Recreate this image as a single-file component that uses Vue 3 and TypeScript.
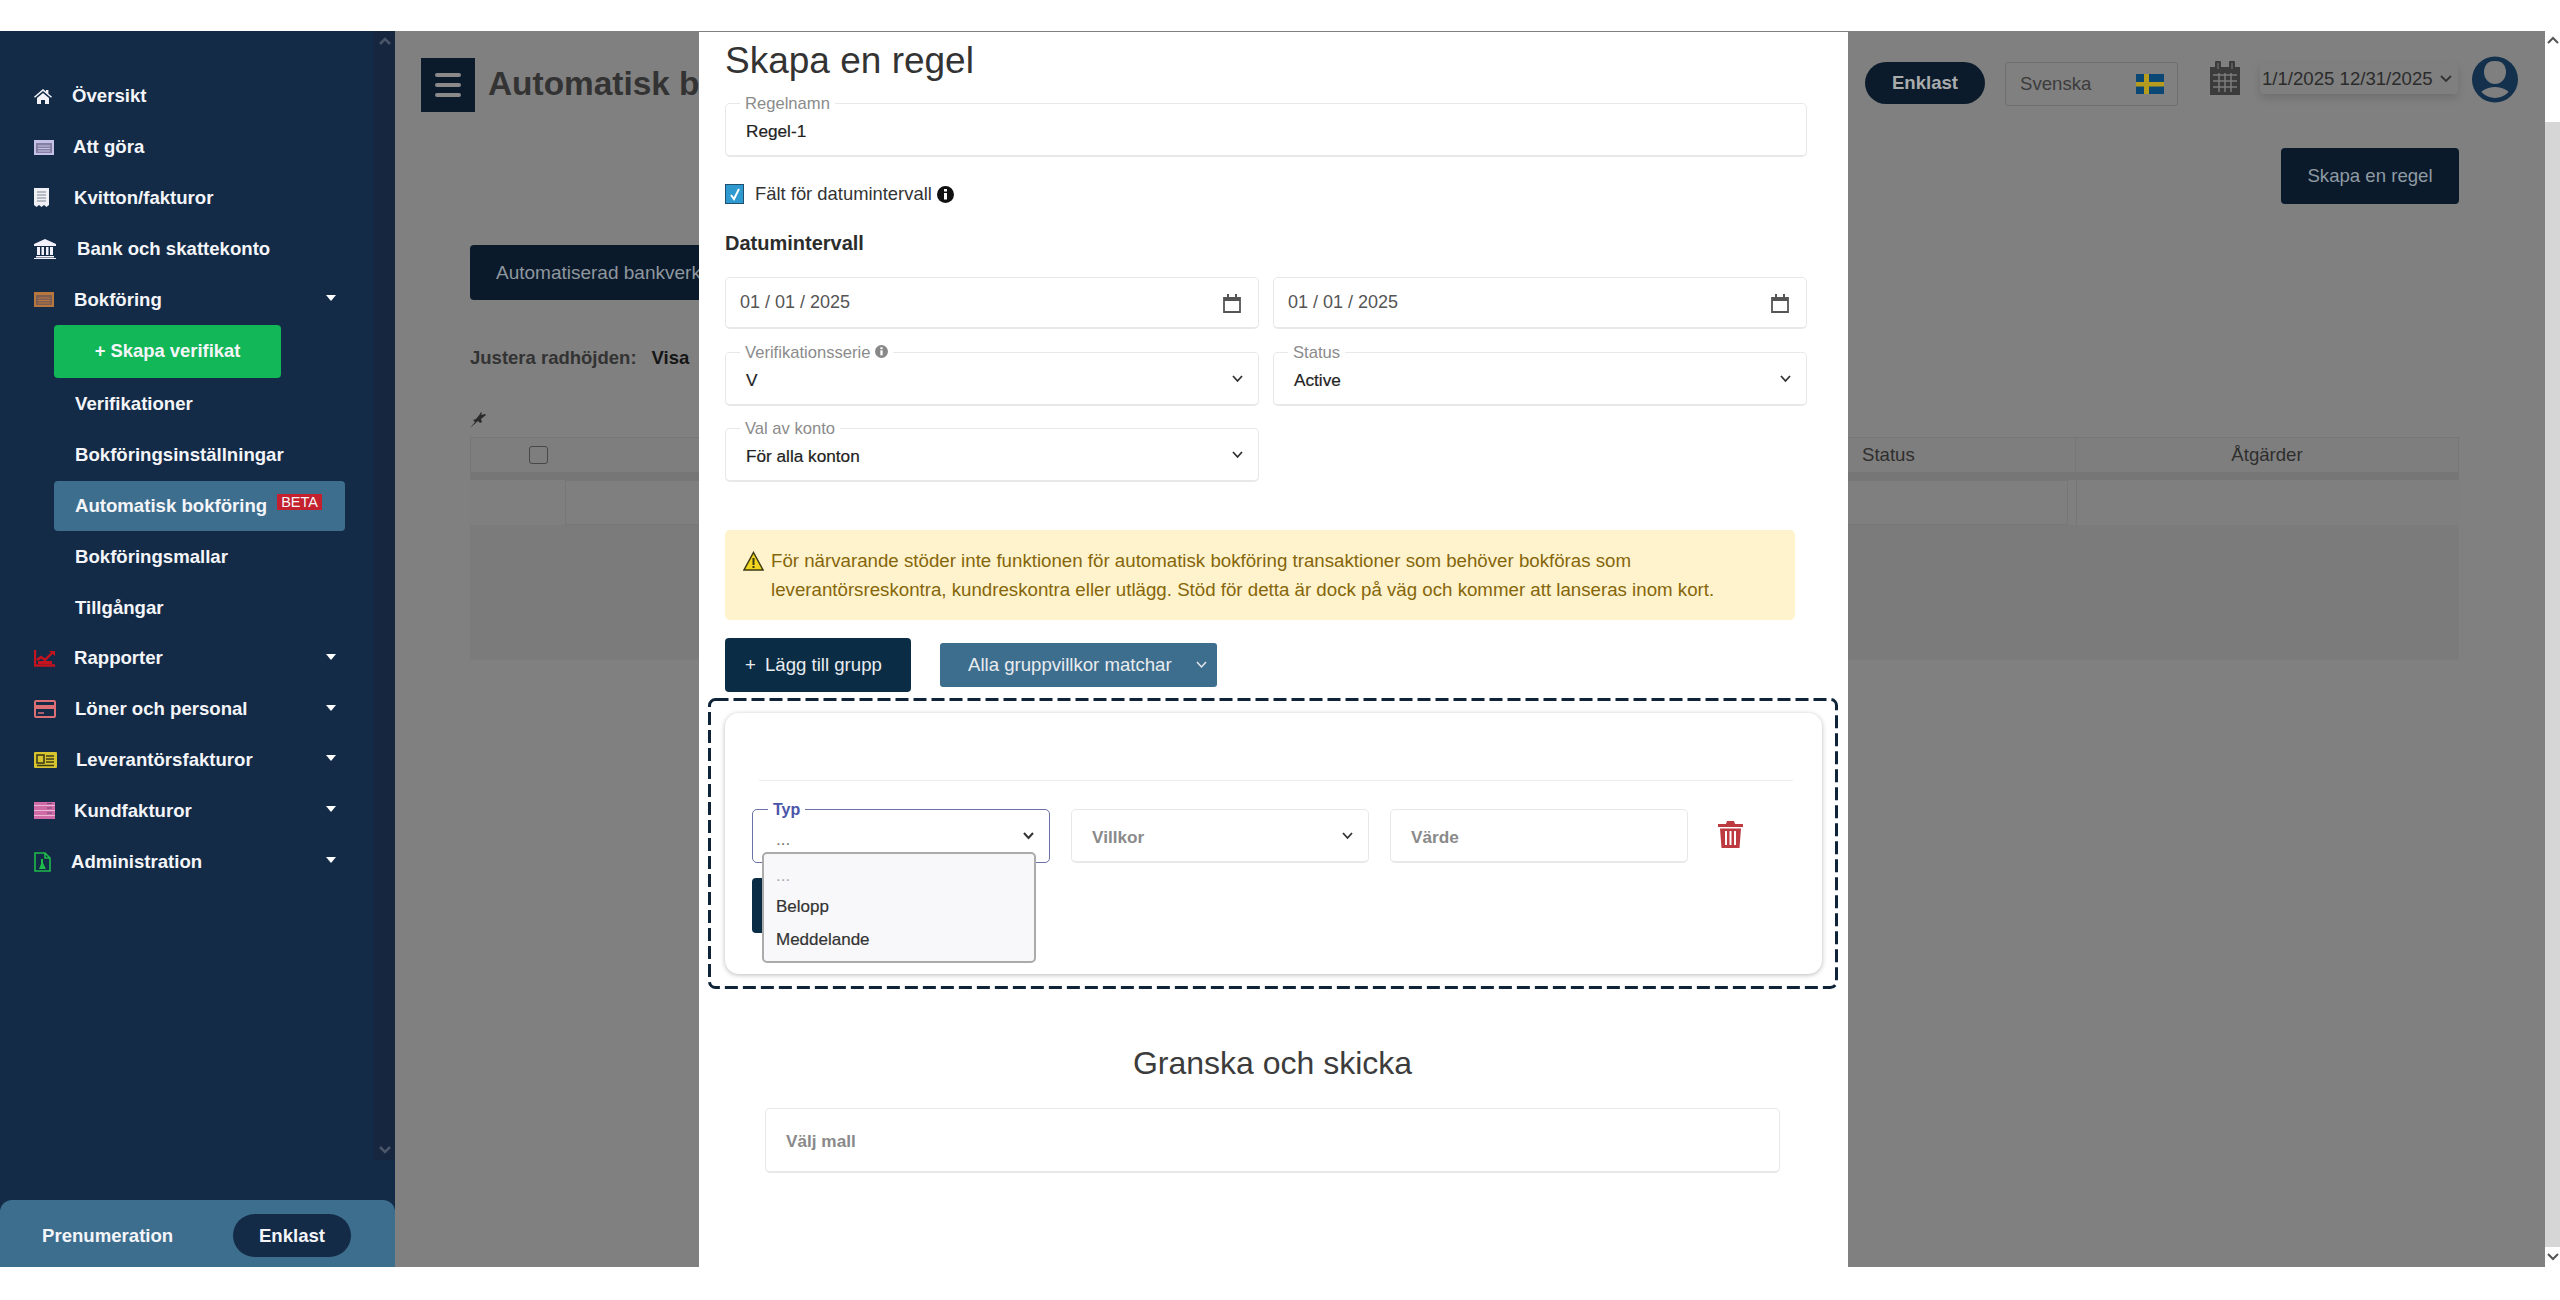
<script setup lang="ts">
type NavIcon = 'home' | 'list' | 'receipt' | 'bank' | 'chart' | 'card' | 'id' | 'rows' | 'file'
interface NavItem { label: string; icon: NavIcon; start: number; color: string; caret?: boolean }

const topItems: NavItem[] = [
  { label: 'Översikt', icon: 'home', start: 38, color: '#f2f2f8' },
  { label: 'Att göra', icon: 'list', start: 39, color: '#c7c0e6' },
  { label: 'Kvitton/fakturor', icon: 'receipt', start: 40, color: '#f0f0f4' },
  { label: 'Bank och skattekonto', icon: 'bank', start: 43, color: '#f2f0fa' },
  { label: 'Bokföring', icon: 'list', start: 40, color: '#b8773c', caret: true },
]
const subItems = ['Verifikationer', 'Bokföringsinställningar', 'Automatisk bokföring', 'Bokföringsmallar', 'Tillgångar']
const lowerItems: NavItem[] = [
  { label: 'Rapporter', icon: 'chart', start: 40, color: '#c5131f', caret: true },
  { label: 'Löner och personal', icon: 'card', start: 41, color: '#dc6e74', caret: true },
  { label: 'Leverantörsfakturor', icon: 'id', start: 42, color: '#d8c42f', caret: true },
  { label: 'Kundfakturor', icon: 'rows', start: 40, color: '#d06aa6', caret: true },
  { label: 'Administration', icon: 'file', start: 37, color: '#1fbb4b', caret: true },
]
</script>

<template>
  <div class="page">
    <div class="frame">
      <aside class="sidebar">
        <div class="side-body">
          <nav class="nav">
            <div v-for="item in topItems" :key="item.label" class="nav-row">
              <span class="nav-icon" :style="{ width: item.start + 'px', color: item.color }">
                <svg v-if="item.icon === 'home'" width="18" height="15" viewBox="0 0 18 15"><path fill="currentColor" d="M9 0l3 2.600V1h2.400v3.700L18 7.800l-1 1-8-6.800-8 6.800-1-1zM3 9l6-5 6 5v6h-4v-4H7v4H3z" /></svg>
                <svg v-else-if="item.icon === 'list'" width="20" height="15" viewBox="0 0 20 15"><rect width="20" height="15" fill="currentColor" /><rect x="2" y="3" width="16" height="10" fill="#4d4a6a" opacity=".55" /><path stroke="currentColor" stroke-width="1" d="M4 6h12M4 8.500h12M4 11h12" /></svg>
                <svg v-else-if="item.icon === 'receipt'" width="15" height="19" viewBox="0 0 15 19"><path fill="currentColor" d="M0 0h15v17l-2.500 2-2.500-2-2.500 2-2.500-2-2.500 2L0 17z" /><path stroke="#7b8496" stroke-width="1.200" d="M3 4h9M3 7h9M3 10h9M3 13h9" /></svg>
                <svg v-else width="22" height="20" viewBox="0 0 22 20"><path fill="currentColor" d="M11 0l11 5v2H0V5zM2 17h18v1.500H2zM0 19h22v1H0zM3 8h3v8H3zM7.500 8h2.500v8H7.500zM12 8h2.500v8H12zM16 8h3v8h-3z" /></svg>
              </span>
              <span>{{ item.label }}</span>
              <span v-if="item.caret" class="caret"></span>
            </div>

            <div class="green-btn">+ Skapa verifikat</div>

            <div
              v-for="sub in subItems"
              :key="sub"
              class="sub-row"
              :class="{ active: sub === 'Automatisk bokföring' }"
            >
              <span>{{ sub }}</span>
              <span v-if="sub === 'Automatisk bokföring'" class="beta">BETA</span>
            </div>

            <div v-for="item in lowerItems" :key="item.label" class="nav-row">
              <span class="nav-icon" :style="{ width: item.start + 'px', color: item.color }">
                <svg v-if="item.icon === 'chart'" width="21" height="17" viewBox="0 0 21 17"><path fill="none" stroke="currentColor" stroke-width="2.400" d="M1 0v15.500h20M3 10l4-3 4 3 7-7" /><path fill="currentColor" d="M15 1h6v5zM4 11h14v3H4z" /></svg>
                <svg v-else-if="item.icon === 'card'" width="22" height="18" viewBox="0 0 22 18"><rect x="1" y="1" width="20" height="16" rx="1" fill="none" stroke="currentColor" stroke-width="2" /><rect x="1" y="5" width="20" height="4" fill="currentColor" /><path stroke="currentColor" stroke-width="1.500" d="M4 13h6" /></svg>
                <svg v-else-if="item.icon === 'id'" width="23" height="16" viewBox="0 0 23 16"><rect width="23" height="16" rx="1" fill="currentColor" /><rect x="3" y="3" width="7" height="8" fill="none" stroke="#3c3c18" stroke-width="1.600" /><path stroke="#3c3c18" stroke-width="1.500" d="M12 4h8M12 7h8M12 10h8M3 13.500h17" /></svg>
                <svg v-else-if="item.icon === 'rows'" width="21" height="17" viewBox="0 0 21 17"><rect width="21" height="17" fill="currentColor" /><path stroke="#e9b6d4" stroke-width="1.200" d="M0 3.500h21M0 8.500h21M0 13.500h21" /><path stroke="#13294a" stroke-width="1" d="M13 1.500h5M13 6h5M13 11h5" opacity=".5" /></svg>
                <svg v-else width="17" height="20" viewBox="0 0 17 20"><path fill="none" stroke="currentColor" stroke-width="1.600" d="M1 1h10l5 5v13H1zM11 1v5h5" /><path fill="currentColor" d="M7 7h2v4l3 6H5l2-5z" /></svg>
              </span>
              <span>{{ item.label }}</span>
              <span class="caret"></span>
            </div>
          </nav>
          <div class="side-scroll">
            <svg width="14" height="8" viewBox="0 0 14 8"><path fill="none" stroke="#4a5568" stroke-width="2.500" d="M2 7l5-5 5 5" /></svg>
            <svg width="14" height="8" viewBox="0 0 14 8"><path fill="none" stroke="#4a5568" stroke-width="2.500" d="M2 1l5 5 5-5" /></svg>
          </div>
        </div>
        <div class="side-foot">
          <span>Prenumeration</span>
          <span class="foot-pill">Enklast</span>
        </div>
      </aside>

      <main class="main">
        <header class="head">
          <button class="burger" type="button" aria-label="Meny">
            <span></span><span></span><span></span>
          </button>
          <h1 class="page-title">Automatisk bokföring</h1>
          <span class="head-pill">Enklast</span>
          <div class="lang">
            <span>Svenska</span>
            <svg width="28" height="20" viewBox="0 0 28 20"><rect width="28" height="20" fill="#0a4775" /><rect x="8" width="5" height="20" fill="#b59c1e" /><rect y="8" width="28" height="4.500" fill="#b59c1e" /></svg>
          </div>
          <svg class="cal" width="30" height="34" viewBox="0 0 30 34">
            <path fill="#3b3b3b" d="M0 6h5V2a3 3 0 0 1 6 0v4h8V2a3 3 0 0 1 6 0v4h5v28H0z" />
            <path stroke="#7c7c7c" stroke-width="1.500" d="M3 14h24M3 20h24M3 26h24M9 12v19M15 12v19M21 12v19" />
            <path stroke="#7c7c7c" stroke-width="1" d="M8 2v6M22 2v6" />
          </svg>
          <div class="range">
            <span>1/1/2025 12/31/2025</span>
            <svg width="12" height="8" viewBox="0 0 12 8"><path fill="none" stroke="#333" stroke-width="1.800" d="M1 1l5 5 5-5" /></svg>
          </div>
          <svg class="avatar" width="46" height="47" viewBox="0 0 46 47">
            <defs><clipPath id="avatar-clip"><circle cx="23" cy="23.500" r="18.500" /></clipPath></defs>
            <circle cx="23" cy="23.500" r="23" fill="#13304c" />
            <g clip-path="url(#avatar-clip)">
              <ellipse cx="23" cy="16" rx="11" ry="12" fill="#7f7f7f" />
              <ellipse cx="23" cy="43" rx="17" ry="12" fill="#7f7f7f" />
            </g>
          </svg>
        </header>

        <div class="content">
          <div class="new-row"><span class="new-btn">Skapa en regel</span></div>
          <div class="tab-row"><span class="tab">Automatiserad bankverksamhet</span></div>
          <p class="adjust">Justera radhöjden:<b>Visa</b></p>
          <svg class="pin" width="17" height="16" viewBox="0 0 17 16"><path fill="#2a2a2a" d="M0 16l5-6-2-2 3-1 4-5 1-2 1 1-1 2 4-1 1 1-5 4 1 3-2 1-2-2z" /></svg>
          <div class="table">
            <div class="thead">
              <div class="th-check"><span class="fake-check"></span></div>
              <div class="th-fill"></div>
              <div class="th-status">Status</div>
              <div class="th-actions">Åtgärder</div>
            </div>
            <div class="strip"></div>
            <div class="filters">
              <div class="f-a"></div>
              <div class="f-b"></div>
              <div class="f-c"></div>
            </div>
            <div class="tbody"></div>
          </div>
        </div>

        <section class="modal">
          <h2 class="modal-title">Skapa en regel</h2>

          <div class="field h54">
            <label class="legend">Regelnamn</label>
            <span class="value">Regel-1</span>
          </div>

          <div class="check-row">
            <span class="checkbox">
              <svg width="12" height="14" viewBox="0 0 12 14"><path fill="none" stroke="#fff" stroke-width="2" d="M2 8l3 4 5-10" /></svg>
            </span>
            <span>Fält för datumintervall</span>
            <svg class="info" width="17" height="17" viewBox="0 0 17 17"><circle cx="8.500" cy="8.500" r="8.500" fill="#111" /><rect x="7" y="7" width="3" height="6.500" fill="#fff" /><rect x="7" y="3" width="3" height="2.500" fill="#fff" /></svg>
          </div>

          <h3 class="section-label">Datumintervall</h3>

          <div class="grid-two date-row">
            <div v-for="n in 2" :key="n" class="field h52 date">
              <span>01 / 01 / 2025</span>
              <svg width="18" height="20" viewBox="0 0 18 20"><path fill="none" stroke="#555" stroke-width="1.800" d="M1 5h16v14H1z" /><path fill="#555" d="M1 5h16v3H1zM4 1h2v5H4zM12 1h2v5h-2z" /></svg>
            </div>
          </div>

          <div class="grid-two select-row">
            <div class="field h54">
              <label class="legend">Verifikationsserie
                <svg width="13" height="13" viewBox="0 0 17 17"><circle cx="8.500" cy="8.500" r="8.500" fill="#888" /><rect x="7" y="7" width="3" height="6.500" fill="#fff" /><rect x="7" y="3" width="3" height="2.500" fill="#fff" /></svg>
              </label>
              <span class="value">V</span>
              <svg class="chev" width="11" height="8" viewBox="0 0 11 8"><path fill="none" stroke="#333" stroke-width="1.800" d="M1 1l4.500 5L10 1" /></svg>
            </div>
            <div class="field h54">
              <label class="legend">Status</label>
              <span class="value">Active</span>
              <svg class="chev" width="11" height="8" viewBox="0 0 11 8"><path fill="none" stroke="#333" stroke-width="1.800" d="M1 1l4.500 5L10 1" /></svg>
            </div>
          </div>

          <div class="grid-two select-row2">
            <div class="field h54">
              <label class="legend">Val av konto</label>
              <span class="value">För alla konton</span>
              <svg class="chev" width="11" height="8" viewBox="0 0 11 8"><path fill="none" stroke="#333" stroke-width="1.800" d="M1 1l4.500 5L10 1" /></svg>
            </div>
          </div>

          <div class="alert">
            <svg class="warn" width="21" height="20" viewBox="0 0 21 20"><path fill="#f1d520" stroke="#3c3a10" stroke-width="1.500" d="M10.500 1.500L20 19H1z" /><path stroke="#3c3a10" stroke-width="2" d="M10.500 7v7M10.500 15v2" /></svg>
            <p>För närvarande stöder inte funktionen för automatisk bokföring transaktioner som behöver bokföras som leverantörsreskontra, kundreskontra eller utlägg. Stöd för detta är dock på väg och kommer att lanseras inom kort.</p>
          </div>

          <div class="actions">
            <span class="add-group"><i>+</i>Lägg till grupp</span>
            <span class="match">Alla gruppvillkor matchar
              <svg width="11" height="8" viewBox="0 0 11 8"><path fill="none" stroke="#e4e8ec" stroke-width="1.500" d="M1 1l4.500 5L10 1" /></svg>
            </span>
          </div>

          <div class="dashed">
            <svg class="dash-line" width="1130" height="291" viewBox="0 0 1130 291">
              <rect x="1.500" y="1.500" width="1127" height="288" rx="6" fill="none" stroke="#0f2438" stroke-width="3" stroke-dasharray="13 5" />
            </svg>
            <div class="card">
              <div class="card-rule"></div>
              <div class="cond-row">
                <div class="field h54 cond focused">
                  <label class="legend typ">Typ</label>
                  <span class="dots">...</span>
                  <svg class="chev" width="11" height="8" viewBox="0 0 11 8"><path fill="none" stroke="#333" stroke-width="2" d="M1 1l4.500 5L10 1" /></svg>
                  <div class="menu">
                    <div class="menu-dots">...</div>
                    <div class="menu-item">Belopp</div>
                    <div class="menu-item">Meddelande</div>
                  </div>
                </div>
                <div class="field h54 cond">
                  <span class="ph">Villkor</span>
                  <svg class="chev" width="11" height="8" viewBox="0 0 11 8"><path fill="none" stroke="#333" stroke-width="1.800" d="M1 1l4.500 5L10 1" /></svg>
                </div>
                <div class="field h54 cond"><span class="ph">Värde</span></div>
                <svg class="trash" width="25" height="27" viewBox="0 0 25 27">
                  <path fill="#bd3a40" d="M0 3h8l1-3h7l1 3h8v3H0zM2 7.500h21L21.500 27h-18zM7 10v14h2V10zM11.500 10v14h2V10zM16 10v14h2V10z" fill-rule="evenodd" />
                </svg>
              </div>
              <span class="add-cond"></span>
            </div>
          </div>

          <div class="review">
            <h2>Granska och skicka</h2>
            <div class="template-box">Välj mall</div>
          </div>
        </section>
      </main>

      <div class="page-scroll">
        <div class="scroll-top">
          <svg width="12" height="8" viewBox="0 0 12 8"><path fill="none" stroke="#555" stroke-width="2" d="M1 7l5-5 5 5" /></svg>
        </div>
        <div class="scroll-thumb"></div>
        <div class="scroll-bottom">
          <svg width="12" height="8" viewBox="0 0 12 8"><path fill="none" stroke="#555" stroke-width="2" d="M1 1l5 5 5-5" /></svg>
        </div>
      </div>
    </div>
  </div>
</template>

<style>
html, body { margin: 0; background: #fff; }
</style>

<style scoped>
* { box-sizing: border-box; }
.page {
  width: 2560px;
  height: 1300px;
  padding-top: 31px;
  background: #fff;
  font-family: "Liberation Sans", Arial, sans-serif;
  overflow: hidden;
}
.frame { display: flex; height: 1236px; }

/* Sidebar */
.sidebar {
  width: 395px;
  flex: none;
  display: flex;
  flex-direction: column;
  justify-content: space-between;
  background: #132b47;
  color: #f4f5f9;
  font-size: 18.6px;
  font-weight: 700;
}
.side-body { display: flex; height: 1129px; }
.nav { width: 374px; padding: 40px 0 0 34px; }
.side-scroll {
  width: 21px;
  display: flex;
  flex-direction: column;
  justify-content: space-between;
  align-items: center;
  padding: 6px 0 6px;
  background: #16263f;
}
.nav-row { display: flex; align-items: center; height: 50.8px; }
.nav-icon { display: flex; align-items: center; flex: none; }
.caret {
  margin-left: auto;
  margin-right: 38px;
  margin-bottom: 3px;
  border-left: 5.500px solid transparent;
  border-right: 5.500px solid transparent;
  border-top: 6px solid #fff;
}
.green-btn {
  width: 227px;
  height: 53px;
  margin: 0 0 1px 20px;
  display: flex;
  align-items: center;
  justify-content: center;
  border-radius: 4px;
  background: #12b757;
  font-size: 18.4px;
}
.sub-row {
  display: flex;
  align-items: center;
  width: 291px;
  height: 50.8px;
  margin-left: 20px;
  padding-left: 21px;
  border-radius: 4px;
}
.sub-row.active { background: #3e6e8e; }
.beta {
  margin: 0 0 7px 10px;
  padding: 0 4px;
  background: #c4202d;
  font-size: 14.500px;
  font-weight: 400;
  line-height: 16px;
}
.side-foot {
  display: flex;
  align-items: center;
  justify-content: space-between;
  height: 67px;
  padding: 4px 44px 0 42px;
  border-radius: 12px 12px 0 0;
  background: #3e6e8e;
}
.foot-pill {
  display: flex;
  align-items: center;
  justify-content: center;
  width: 118px;
  height: 43px;
  border-radius: 22px;
  background: #132b47;
}

/* Dimmed page */
.main {
  position: relative;
  flex: 1;
  background: #808080;
  font-size: 18.6px;
  color: #2e2e2e;
}
.head { display: flex; align-items: flex-start; height: 80px; padding: 25px 27px 0 26px; }
.burger {
  display: flex;
  flex-direction: column;
  justify-content: center;
  gap: 6px;
  width: 54px;
  height: 54px;
  margin-top: 2px;
  padding: 0 14px;
  border: 0;
  background: #0c1b2c;
}
.burger span { height: 4px; border-radius: 2px; background: #8a8a8a; }
.page-title {
  width: 211px;
  margin: 6px auto 0 13px;
  overflow: hidden;
  white-space: nowrap;
  font-size: 33.400px;
  line-height: 44px;
  font-weight: 700;
  color: #333;
}
.head-pill {
  display: flex;
  align-items: center;
  justify-content: center;
  width: 120px;
  height: 42px;
  margin-top: 6px;
  border-radius: 21px;
  background: #0c1b2c;
  color: #a9abad;
  font-weight: 700;
}
.lang {
  display: flex;
  align-items: center;
  justify-content: space-between;
  width: 173px;
  height: 44px;
  margin: 6px 0 0 20px;
  padding: 0 13px 0 14px;
  border: 1px solid #6e6e6e;
  border-radius: 3px;
  color: #3c3c3c;
}
.cal { margin: 5px 0 0 32px; }
.range {
  display: flex;
  align-items: center;
  gap: 7px;
  width: 198px;
  height: 31px;
  margin: 7px 0 0 20px;
  padding-left: 2px;
  border-radius: 4px;
  background: #7f7f7f;
  box-shadow: 0 4px 8px rgba(0, 0, 0, .14);
  color: #2b2b2b;
}
.avatar { margin-left: 14px; }
.content { padding: 37px 86px 0 75px; }
.new-row { display: flex; justify-content: flex-end; }
.new-btn {
  display: flex;
  align-items: center;
  justify-content: center;
  width: 178px;
  height: 56px;
  border-radius: 4px;
  background: #0a1a2b;
  color: #8f9aa3;
}
.tab-row { margin-top: 41px; }
.tab {
  display: flex;
  align-items: center;
  width: 230px;
  height: 55px;
  padding-left: 26px;
  overflow: hidden;
  white-space: nowrap;
  border-radius: 4px 0 0 4px;
  background: #0a1a2b;
  color: #8f979e;
  font-size: 19px;
}
.adjust {
  display: flex;
  gap: 15px;
  margin: 47px 0 0;
  font-weight: 700;
  font-size: 18.500px;
  line-height: 22px;
  color: #333;
}
.adjust b { color: #151515; }
.pin { display: block; margin: 43px 0 0; }
.table { margin-top: 9px; background: #7b7b7b; }
.thead {
  display: flex;
  align-items: center;
  height: 36px;
  border: 1px solid #767676;
  background: #7e7e7e;
}
.th-check { width: 95px; padding-left: 58px; }
.fake-check {
  display: block;
  width: 19px;
  height: 18px;
  border: 1.500px solid #484848;
  border-radius: 3px;
}
.th-fill { flex: 1; }
.th-status { width: 213px; }
.th-actions { width: 383px; text-align: center; line-height: 34px; border-left: 1px solid #787878; }
.strip { height: 7px; background: #767676; }
.filters { display: flex; height: 45px; background: #7f7f7f; }
.f-a { width: 95px; }
.f-b { flex: 1; border: 1px solid #777; }
.f-c { width: 383px; margin-left: 8px; border-left: 1px solid #777; }
.tbody { height: 135px; }

/* Modal */
.modal {
  position: absolute;
  top: 1px;
  left: 304px;
  width: 1149px;
  height: 1235px;
  padding: 7px 41px 0 26px;
  overflow: hidden;
  background: #fff;
  color: #222;
  font-size: 17.200px;
}
.modal-title {
  margin: 0 0 20px;
  font-size: 37px;
  line-height: 44px;
  font-weight: 400;
  color: #333;
}
.field {
  position: relative;
  display: flex;
  align-items: center;
  padding: 0 15px 0 20px;
  border: 1px solid #e8e8e8;
  border-bottom-width: 2px;
  border-radius: 5px;
  background: #fff;
}
.h52 { height: 52px; }
.h54 { height: 54px; }
.legend {
  position: absolute;
  top: -9px;
  left: 14px;
  padding: 0 5px;
  background: #fff;
  color: #8b8b8b;
  font-size: 16.600px;
  line-height: 17px;
}
.value { padding-top: 4px; -webkit-text-stroke: .2px #222; }
.chev { margin-left: auto; }
.date { justify-content: space-between; padding: 0 17px 0 14px; color: #555; font-size: 18px; }
.check-row {
  display: flex;
  align-items: center;
  gap: 11px;
  height: 20px;
  margin-top: 27px;
  font-size: 18.400px;
  color: #333;
}
.checkbox {
  display: flex;
  align-items: center;
  justify-content: center;
  width: 19px;
  height: 20px;
  border: 1px solid #20506e;
  background: #2e9ad0;
}
.info { margin-left: -6px; }
.section-label {
  margin: 27px 0 0;
  font-size: 20px;
  line-height: 24px;
  font-weight: 700;
  color: #2c2c2c;
}
.grid-two { display: grid; grid-template-columns: 534px 534px; gap: 14px; }
.date-row { margin-top: 22px; }
.select-row { margin-top: 23px; }
.select-row2 { margin-top: 22px; }
.alert {
  display: flex;
  gap: 7px;
  width: 1070px;
  height: 90px;
  margin-top: 48px;
  padding: 16px 18px 0 18px;
  border-radius: 5px;
  background: #fff3cd;
  color: #85660a;
  font-size: 18.700px;
  line-height: 29px;
}
.alert p { margin: 0; max-width: 990px; }
.warn { flex: none; margin-top: 5px; }
.actions { display: flex; align-items: center; gap: 29px; margin-top: 18px; font-size: 18.600px; }
.add-group {
  display: flex;
  align-items: center;
  width: 186px;
  height: 54px;
  padding-left: 20px;
  border-radius: 4px;
  background: #0b2c45;
  color: #e8ecef;
}
.add-group i { width: 20px; font-style: normal; }
.match {
  display: flex;
  align-items: center;
  gap: 24px;
  width: 277px;
  height: 44px;
  padding-left: 28px;
  border-radius: 3px;
  background: #3e6e8e;
  color: #e8ecef;
  white-space: nowrap;
}
.dashed {
  position: relative;
  width: 1130px;
  height: 291px;
  margin: 6px 0 0 -17px;
  padding: 15px 16px 15px 17px;
}
.dash-line { position: absolute; top: 0; left: 0; }
.card {
  position: relative;
  height: 261px;
  padding: 67px 29px 0 34px;
  border-radius: 14px;
  background: #fff;
  box-shadow: 0 1px 5px rgba(0, 0, 0, .28);
}
.card-rule { height: 1px; background: #ececec; }
.cond-row { display: flex; align-items: flex-start; gap: 21px; margin: 28px 0 0 -7px; }
.cond { width: 298px; }
.focused { border: 1.500px solid #6a72a8; }
.legend.typ { color: #4a55a8; font-weight: 700; font-size: 16px; left: 15px; }
.dots { color: #777; padding-top: 6px; margin-left: 3px; }
.ph { padding-top: 3px; font-weight: 700; color: #8a8a8a; }
.trash { margin: 12px 0 0 9px; }
.menu {
  position: absolute;
  top: 42px;
  left: 9px;
  z-index: 2;
  width: 274px;
  height: 111px;
  padding-top: 13px;
  border: 2px solid #ababab;
  border-radius: 5px;
  background: #f8f8fa;
  font-size: 17px;
  color: #333;
  -webkit-text-stroke: .2px #333;
}
.menu-dots { height: 23px; padding-left: 12px; color: #aaa; line-height: 18px; -webkit-text-stroke: 0; }
.menu-item { height: 33px; padding-left: 12px; line-height: 33px; }
.add-cond {
  display: block;
  width: 220px;
  height: 55px;
  margin: 15px 0 0 -7px;
  border-radius: 4px;
  background: #0b2c45;
}
.review { padding: 54px 27px 0 40px; text-align: center; }
.review h2 {
  margin: 0;
  font-size: 32px;
  line-height: 40px;
  font-weight: 400;
  color: #3c3c3c;
}
.template-box {
  display: flex;
  align-items: center;
  height: 65px;
  margin-top: 25px;
  padding: 2px 0 0 20px;
  border: 1px solid #e8e8e8;
  border-bottom-width: 2px;
  border-radius: 5px;
  font-weight: 700;
  font-size: 17.200px;
  color: #8a8a8a;
}

/* Page scrollbar */
.page-scroll { width: 15px; flex: none; display: flex; flex-direction: column; }
.scroll-top { height: 91px; padding: 5px 0 0 2px; background: #fff; }
.scroll-thumb { flex: 1; background: #d6d6d6; }
.scroll-bottom { height: 20px; padding: 6px 0 0 2px; background: #fff; }
.scroll-top svg, .scroll-bottom svg { display: block; }
</style>
